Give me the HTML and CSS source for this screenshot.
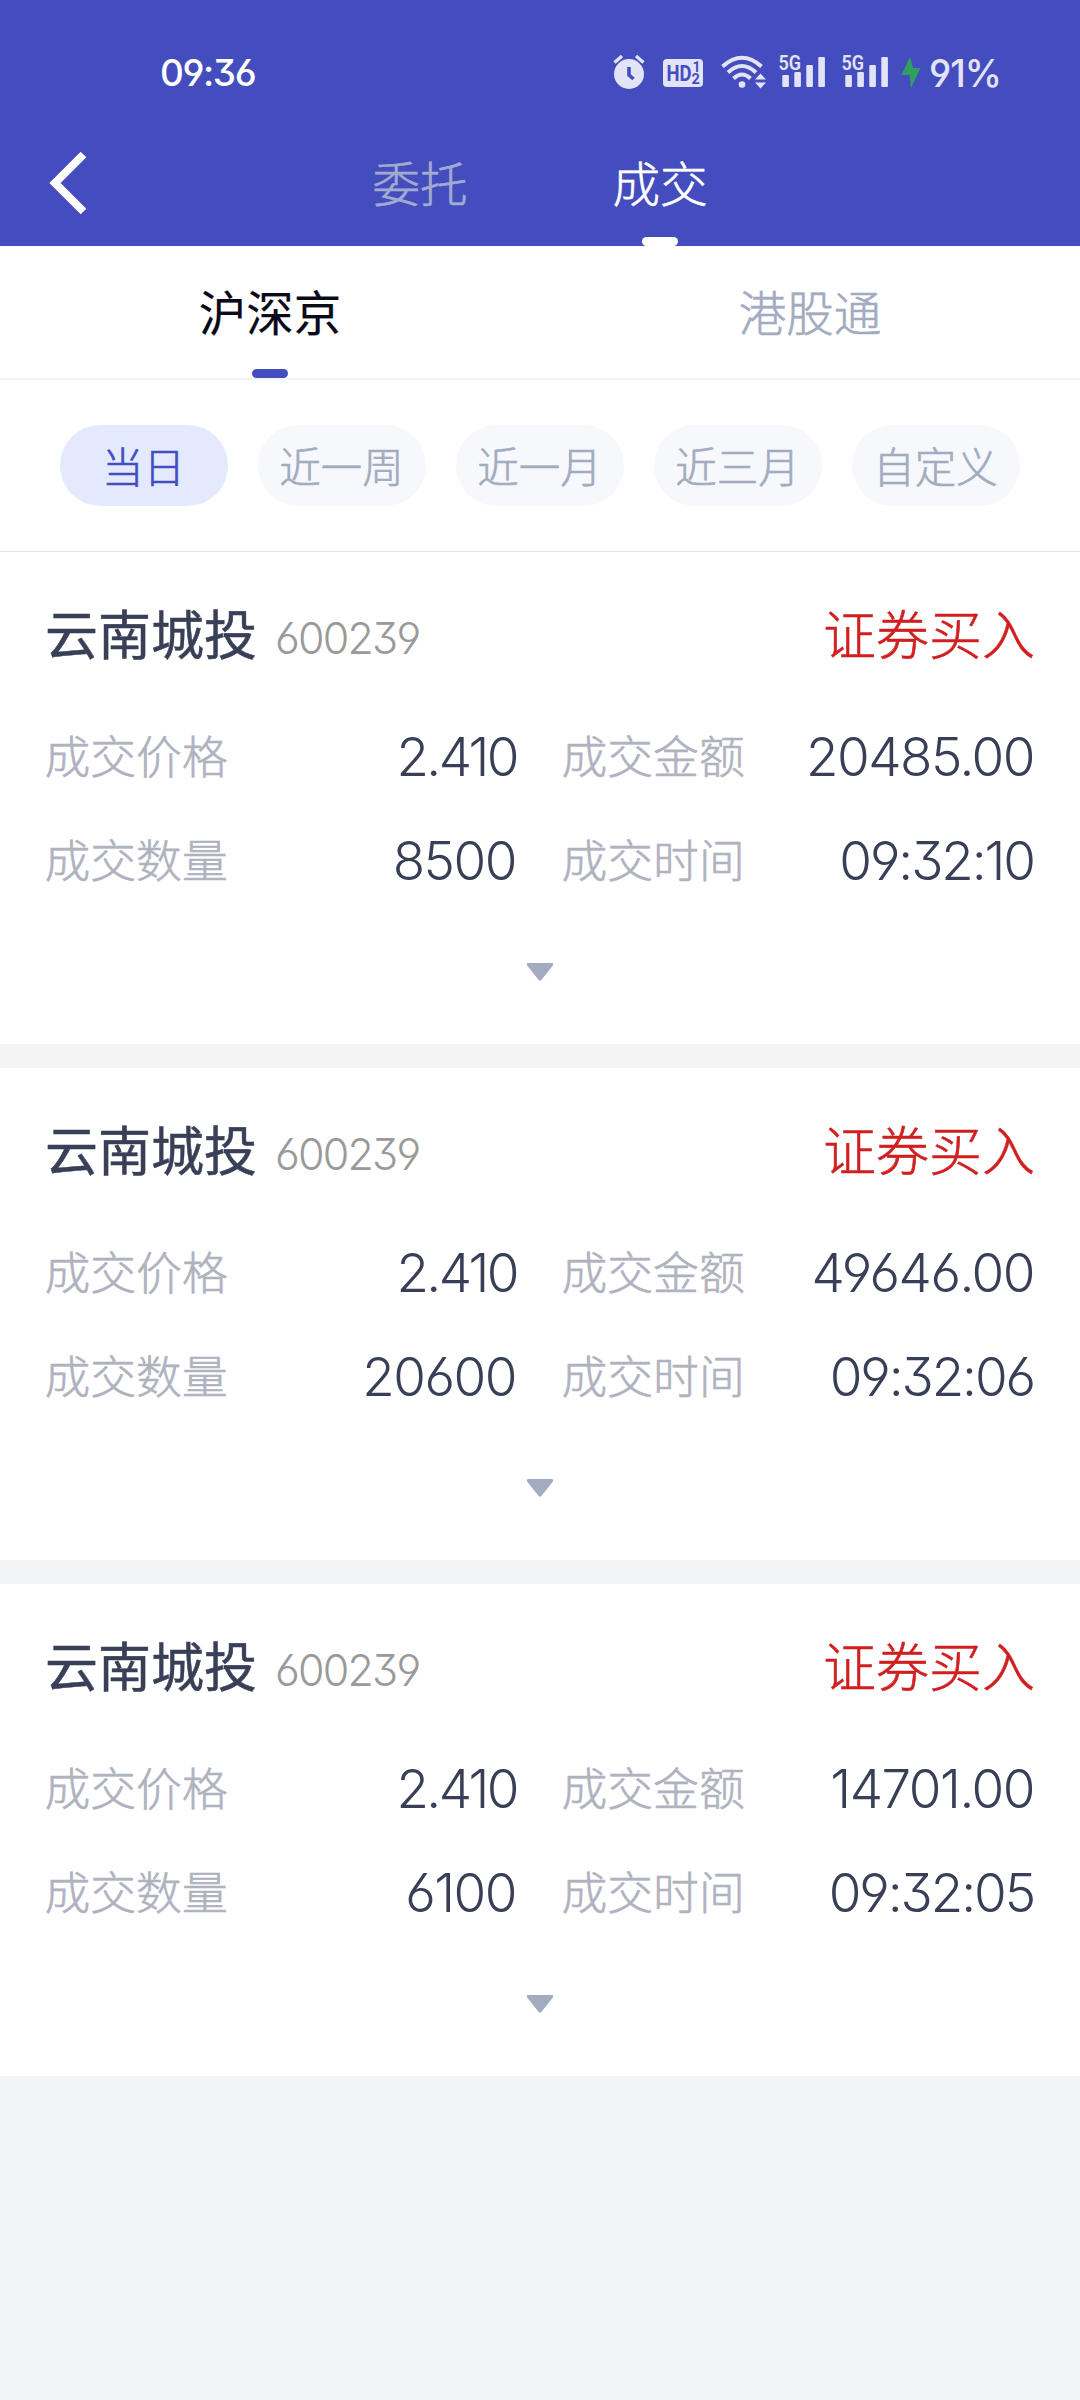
FILE: index.html
```html
<!DOCTYPE html>
<html lang="zh-CN">
<head>
<meta charset="utf-8">
<meta name="viewport" content="width=1080">
<title>成交</title>
<link rel="stylesheet" href="styles.css">
</head>
<body>
<header class="header">
  <div class="status">
    <span class="clock">09:36</span>
    <div class="status-icons">
      <svg class="ic-alarm" width="32" height="36" viewBox="0 0 32 36"><circle cx="16" cy="20" r="15" fill="currentColor"/><path d="M1.500 8.500 9 2M30.500 8.500 23 2" stroke="currentColor" stroke-width="3.400"/><path d="M16 13v8l4.500 4" fill="none" stroke="#444dbe" stroke-width="3.600"/></svg>
      <svg class="ic-hd" width="40" height="36" viewBox="0 0 40 36"><rect y="5" width="40" height="28" rx="4" fill="currentColor"/><g fill="#444dbe" font-family="Roboto, sans-serif" font-weight="700"><text x="3.500" y="27" font-size="22" textLength="25" lengthAdjust="spacingAndGlyphs">HD</text><text x="29.500" y="18" font-size="14">1</text><text x="28.500" y="30" font-size="14.500">2</text></g></svg>
      <svg class="ic-wifi" width="46" height="36" viewBox="0 0 46 36"><g fill="none" stroke="currentColor" stroke-width="4"><path d="M1.500 12.500Q21 -5 40.500 12.500"/><path d="M7 18.500Q21 5.500 35 18.500"/><path d="M12.500 24.500Q21 16.500 29.500 24.500"/></g><circle cx="21" cy="30.500" r="3.300" fill="currentColor"/><path d="M34 25.500h11l-5.500-6zM34 28.500h11l-5.500 6z" fill="currentColor"/></svg>
      <svg class="ic-signal" width="48" height="40" viewBox="0 -2 48 40"><g fill="currentColor"><rect x="4.300" y="21" width="6.600" height="12" rx="1"/><rect x="16.300" y="18" width="6.600" height="15" rx="1"/><rect x="28.300" y="11" width="6.600" height="22" rx="1"/><rect x="40.300" y="3" width="6.600" height="30" rx="1"/><text x="0.500" y="16" font-family="Roboto, sans-serif" font-weight="600" font-size="20.500" textLength="22.500" lengthAdjust="spacingAndGlyphs">5G</text></g></svg>
      <svg class="ic-signal" width="48" height="40" viewBox="0 -2 48 40"><g fill="currentColor"><rect x="4.300" y="21" width="6.600" height="12" rx="1"/><rect x="16.300" y="18" width="6.600" height="15" rx="1"/><rect x="28.300" y="11" width="6.600" height="22" rx="1"/><rect x="40.300" y="3" width="6.600" height="30" rx="1"/><text x="0.500" y="16" font-family="Roboto, sans-serif" font-weight="600" font-size="20.500" textLength="22.500" lengthAdjust="spacingAndGlyphs">5G</text></g></svg>
      <svg class="ic-bolt" width="20" height="36" viewBox="0 0 20 36"><path d="M9 3 .5 21H8.500L10 34 19.500 14H12z" fill="#30a060"/></svg>
      <span class="battery">91%</span>
    </div>
  </div>
  <nav class="topnav">
    <svg class="back" width="38" height="64" viewBox="0 0 38 64"><path d="M34.500 3.500 6 32l28.500 28.500" fill="none" stroke="#fff" stroke-width="8"/></svg>
    <a class="top-tab">委托</a>
    <a class="top-tab active">成交</a>
  </nav>
</header>
<nav class="markets">
  <a class="market active">沪深京</a>
  <a class="market">港股通</a>
</nav>
<div class="ranges">
  <span class="chip active">当日</span>
  <span class="chip">近一周</span>
  <span class="chip">近一月</span>
  <span class="chip">近三月</span>
  <span class="chip">自定义</span>
</div>
<main class="deals">
  <section class="deal">
    <div class="deal-head"><h2 class="name">云南城投</h2><span class="code">600239</span><span class="side">证券买入</span></div>
    <div class="grid">
      <div class="field"><span class="label">成交价格</span><span class="value price">2.410</span></div>
      <div class="field"><span class="label">成交金额</span><span class="value">20485.00</span></div>
      <div class="field"><span class="label">成交数量</span><span class="value">8500</span></div>
      <div class="field"><span class="label">成交时间</span><span class="value time">09:32:10</span></div>
    </div>
    <svg class="more" width="28" height="18" viewBox="0 0 28 18"><path d="M2 0H26Q28.200 .6 26.500 3L15.300 17Q14 18.500 12.700 17L1.500 3Q-.2.6 2 0z" fill="#a2abbf"/></svg>
  </section>
  <section class="deal">
    <div class="deal-head"><h2 class="name">云南城投</h2><span class="code">600239</span><span class="side">证券买入</span></div>
    <div class="grid">
      <div class="field"><span class="label">成交价格</span><span class="value price">2.410</span></div>
      <div class="field"><span class="label">成交金额</span><span class="value">49646.00</span></div>
      <div class="field"><span class="label">成交数量</span><span class="value">20600</span></div>
      <div class="field"><span class="label">成交时间</span><span class="value time">09:32:06</span></div>
    </div>
    <svg class="more" width="28" height="18" viewBox="0 0 28 18"><path d="M2 0H26Q28.200 .6 26.500 3L15.300 17Q14 18.500 12.700 17L1.500 3Q-.2.6 2 0z" fill="#a2abbf"/></svg>
  </section>
  <section class="deal">
    <div class="deal-head"><h2 class="name">云南城投</h2><span class="code">600239</span><span class="side">证券买入</span></div>
    <div class="grid">
      <div class="field"><span class="label">成交价格</span><span class="value price">2.410</span></div>
      <div class="field"><span class="label">成交金额</span><span class="value">14701.00</span></div>
      <div class="field"><span class="label">成交数量</span><span class="value">6100</span></div>
      <div class="field"><span class="label">成交时间</span><span class="value time">09:32:05</span></div>
    </div>
    <svg class="more" width="28" height="18" viewBox="0 0 28 18"><path d="M2 0H26Q28.200 .6 26.500 3L15.300 17Q14 18.500 12.700 17L1.500 3Q-.2.6 2 0z" fill="#a2abbf"/></svg>
  </section>
</main>
</body>
</html>
```
FILE: styles.css
```css
* { box-sizing: border-box; }
body {
  margin: 0;
  min-height: 2400px;
  background: #f3f4f6;
  font-family: "Noto Sans CJK SC", sans-serif;
  font-weight: 300;
  color: #383f57;
}
.header { height: 246px; background: #444dbe; color: #fff; }
.status {
  display: flex;
  justify-content: space-between;
  align-items: center;
  height: 144px;
  padding: 0 80px 0 160px;
}
.clock, .battery, .code, .value {
  font-family: Inter, sans-serif;
  font-feature-settings: "cv03", "cv04", "cv09";
  white-space: nowrap;
}
.clock { padding-top: 1px; font-size: 37px; font-weight: 500; letter-spacing: -1.400px; }
.status-icons { display: flex; align-items: center; color: #e3e3f8; }
.ic-hd { margin-left: 18px; }
.ic-wifi { margin-left: 18px; }
.ic-signal { margin-left: 11px; }
.ic-signal + .ic-signal { margin-left: 15px; }
.ic-bolt { margin-left: 12px; }
.battery { margin-left: 8px; width: 71px; padding-top: 3px; font-size: 37.500px; font-weight: 500; letter-spacing: -1px; }
.topnav { display: flex; height: 102px; padding-left: 49px; }
.back { margin-top: 7px; margin-right: 213px; }
.top-tab, .market, .chip, .label, .side { -webkit-text-stroke: 0.600px currentColor; }
.top-tab {
  position: relative;
  width: 240px;
  font-size: 47.500px;
  line-height: 76px;
  text-align: center;
  color: #a2abcf;
}
.top-tab.active { color: #fff; }
.top-tab.active::after, .market.active::after {
  content: "";
  position: absolute;
  bottom: 0;
  left: 50%;
  width: 36px;
  height: 9px;
  margin-left: -18px;
  border-radius: 5px;
  background: #fff;
}
.markets {
  display: flex;
  height: 134px;
  background: #fff;
  border-bottom: 2px solid #f3f4f6;
}
.market {
  position: relative;
  flex: 1;
  font-size: 47.500px;
  line-height: 130px;
  text-align: center;
  color: #a2abbf;
}
.market.active { color: #0a0b1a; font-weight: 400; -webkit-text-stroke-width: 0.200px; }
.market.active::after { background: #444dbe; }
.ranges {
  display: flex;
  gap: 30px;
  height: 172px;
  padding: 45px 60px 0;
  background: #fff;
  border-bottom: 1px solid #e4e5e7;
}
.chip {
  width: 168px;
  height: 81px;
  padding-right: 1px;
  border-radius: 41px;
  background: #f6f8fc;
  font-size: 41.500px;
  line-height: 81px;
  text-align: center;
  color: #a2abbf;
}
.chip.active { background: #e5e9fe; color: #444dbe; }
.deals { display: flex; flex-direction: column; gap: 24px; }
.deal {
  display: flex;
  flex-direction: column;
  height: 492px;
  padding: 42px 45px 0;
  background: #fff;
}
.deal-head { display: flex; align-items: center; height: 80px; }
.name { margin: 0; font-size: 53px; font-weight: 400; line-height: 76px; padding-bottom: 4px; -webkit-text-stroke: 0.500px currentColor; }
.code { margin-left: 18px; padding-top: 7px; font-size: 43px; letter-spacing: -1.800px; color: #9a9a9a; }
.side { margin-left: auto; padding-bottom: 4px; font-size: 53px; line-height: 76px; color: #d11f1f; }
.grid {
  display: grid;
  grid-template-columns: 472px 473px;
  grid-template-rows: 104px 104px;
  column-gap: 45px;
  margin-top: 30px;
}
.field { display: flex; justify-content: space-between; height: 104px; line-height: 106px; }
.label { line-height: 101px; font-size: 45.800px; margin-left: -0.500px; color: #b0b2bf; }
.value { font-size: 53px; letter-spacing: -1.500px; margin-right: 1px; }
.value.price { letter-spacing: -2.600px; margin-right: 0; }
.value.time { letter-spacing: -2.100px; }
.more { align-self: center; margin-top: 51px; }
```
